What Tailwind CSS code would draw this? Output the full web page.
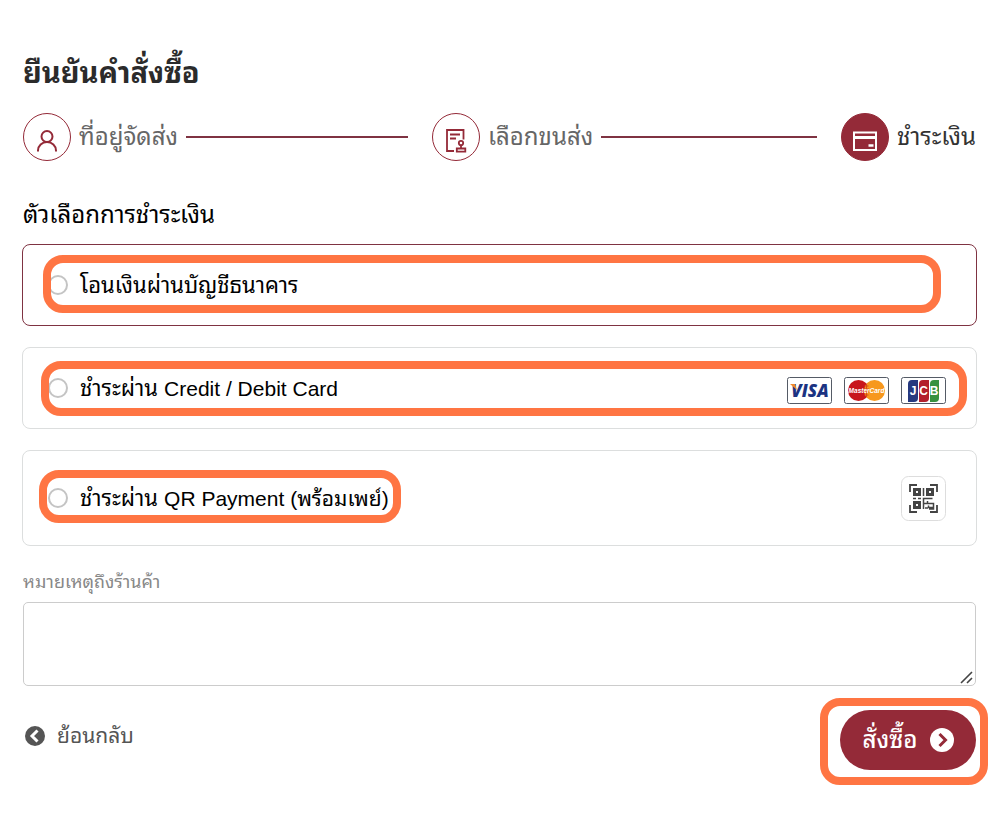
<!DOCTYPE html>
<html lang="th">
<head>
  <meta charset="UTF-8">
  <meta name="viewport" content="width=device-width, initial-scale=1.0">
  <title>ยืนยันคำสั่งซื้อ</title>
  <script src="https://cdn.jsdelivr.net/npm/@tailwindcss/browser@4"></script>
</head>
<body class="bg-white text-black font-['Liberation_Sans','Waree','Noto_Sans_Thai_Looped','Loma','Noto_Sans_Thai','Noto_Sans',sans-serif]">
  <main class="pl-[22px] pr-[31px] pt-[53px] pb-11">
    <h1 class="mx-px text-[29px] leading-10 font-bold text-[#2b2b2b]">ยืนยันคำสั่งซื้อ</h1>

    <!-- Steps -->
    <ol class="mx-px mt-5 flex items-center gap-6 text-2xl leading-8 text-[#666]">
      <li class="flex flex-1 items-center gap-2">
        <span class="size-12 shrink-0 rounded-full border border-[#942a38] text-[#942a38]">
          <svg class="size-full" viewBox="0 0 46 46" fill="none" stroke="currentColor" stroke-width="2">
            <circle cx="23" cy="22.500" r="5.500"/>
            <path d="M14 37.500v-1a9 8.500 0 0 1 18 0v1"/>
          </svg>
        </span>
        <span>ที่อยู่จัดส่ง</span>
        <span class="h-[2px] flex-1 bg-[#7f3342]"></span>
      </li>
      <li class="flex flex-1 items-center gap-2">
        <span class="size-12 shrink-0 rounded-full border border-[#942a38] text-[#942a38]">
          <svg class="size-full" viewBox="0 0 46 46" fill="none" stroke="currentColor" stroke-width="1.800">
            <path d="M21 37h-7V16h16.500v9.500M17 20.500h10M17 24.500h6"/>
            <circle cx="28" cy="29" r="2.200"/>
            <path d="M28 31.500V34M23.800 34.500h8.500v3.200h-8.500z"/>
          </svg>
        </span>
        <span>เลือกขนส่ง</span>
        <span class="h-[2px] flex-1 bg-[#7f3342]"></span>
      </li>
      <li class="flex items-center gap-2 text-[#333]">
        <span class="size-12 shrink-0 rounded-full border border-[#942a38] bg-[#942a38] text-white">
          <svg class="size-full" viewBox="0 0 46 46" fill="none" stroke="currentColor" stroke-width="2">
            <path d="M12 18.500h22v17.500H12z"/>
            <path d="M12 23.500h22" stroke-width="3"/>
            <path d="M26.500 31.500h5" stroke-width="2.500"/>
          </svg>
        </span>
        <span>ชำระเงิน</span>
      </li>
    </ol>

    <!-- Payment options -->
    <fieldset class="mt-9">
      <legend class="mx-px text-2xl leading-9">ตัวเลือกการชำระเงิน</legend>
      <div class="mt-[11px] space-y-[21px] text-[22px]">
        <div class="relative flex h-[82px] items-center rounded-lg border border-[#7f3342] pl-[25px]">
          <label class="flex items-center gap-3">
            <input type="radio" name="payment" class="size-5 appearance-none rounded-full border-2 border-[#c4c4c4] checked:border-[#942a38]">
            <span>โอนเงินผ่านบัญชีธนาคาร</span>
          </label>
          <span class="pointer-events-none absolute top-[10px] bottom-3 left-5 right-[35px] rounded-[20px] border-8 border-[#ff7543]"></span>
        </div>
        <div class="relative flex h-[82px] items-center justify-between rounded-lg border border-[#dcdede] pl-[25px] pr-[30px]">
          <label class="flex items-center gap-3">
            <input type="radio" name="payment" class="size-5 appearance-none rounded-full border-2 border-[#c4c4c4] checked:border-[#942a38]">
            <span>ชำระผ่าน <span class="text-[21px]">Credit / Debit Card</span></span>
          </label>
          <span class="flex gap-3 pt-1">
            <svg class="h-[27px] w-[45px] font-['Open_Sans',sans-serif]" viewBox="0 0 45 27">
              <rect x=".5" y=".5" width="44" height="26" rx="2" fill="#fff" stroke="#555b66"/>
              <text x="23" y="20" text-anchor="middle" font-size="17" font-weight="800" font-style="italic" fill="#1b3382">VISA</text>
              <path d="M3 7h5l2 6z" fill="#f08a2c"/>
            </svg>
            <svg class="h-[27px] w-[45px]" viewBox="0 0 45 27">
              <rect x=".5" y=".5" width="44" height="26" rx="2" fill="#fff" stroke="#555b66"/>
              <circle cx="14.500" cy="13.500" r="10.500" fill="#c8161d"/>
              <circle cx="30.500" cy="13.500" r="10.500" fill="#f7981d"/>
              <path d="M22.500 6.700v13.600M20.500 9h4M20 12h5M20 15h5M20.500 18h4" stroke="#d64a1c"/>
              <text x="22.500" y="16" text-anchor="middle" font-size="6.500" font-weight="700" font-style="italic" fill="#fff">MasterCard</text>
            </svg>
            <svg class="h-[27px] w-[45px]" viewBox="0 0 45 27">
              <rect x=".5" y=".5" width="44" height="26" rx="2" fill="#fff" stroke="#555b66"/>
              <path d="M11 3h6v18a4 4 0 0 1-4 4H7V7a4 4 0 0 1 4-4z" fill="#26397f"/>
              <path d="M22 3h6v18a4 4 0 0 1-4 4h-6V7a4 4 0 0 1 4-4z" fill="#b3202c"/>
              <path d="M33 3h5v18a4 4 0 0 1-4 4h-5V7a4 4 0 0 1 4-4z" fill="#37923f"/>
              <g font-size="12" font-weight="700" fill="#fff" text-anchor="middle">
                <text x="12" y="18">J</text>
                <text x="22.500" y="18">C</text>
                <text x="33" y="18">B</text>
              </g>
            </svg>
          </span>
          <span class="pointer-events-none absolute top-[13px] bottom-3 left-[18px] right-[9px] rounded-[20px] border-8 border-[#ff7543]"></span>
        </div>
        <div class="relative flex h-24 items-center justify-between rounded-lg border border-[#dcdede] pl-[25px] pr-[30px]">
          <label class="flex items-center gap-3">
            <input type="radio" name="payment" class="size-5 appearance-none rounded-full border-2 border-[#c4c4c4] checked:border-[#942a38]">
            <span>ชำระผ่าน <span class="text-[21px]">QR Payment (พร้อมเพย์)</span></span>
          </label>
          <svg class="size-[45px]" viewBox="0 0 45 45" fill="none" stroke="#444" stroke-width="1.500">
            <rect x=".5" y=".5" width="44" height="44" rx="7" stroke="#ddd" stroke-width="1"/>
            <path d="M9 16V9h7M29 9h7v7M36 29v7h-7M16 36H9v-7" stroke-width="1.800"/>
            <path d="M13.500 13.500h5v5h-5zM26.500 13.500h5v5h-5zM13.500 26.500h5v5h-5z" stroke-width="3"/>
            <path d="M22.500 12v8M12 22.500h3M17 22.500h3M22.500 33V22.500h9M22.500 27.500h4v-2.500M26.500 27.500h6v4h-5v-2M24 32h3M32.500 31v2H28" stroke-width="1.500"/>
          </svg>
          <span class="pointer-events-none absolute top-[19px] bottom-[22px] left-4 w-[362px] rounded-[20px] border-8 border-[#ff7543]"></span>
        </div>
      </div>
    </fieldset>

    <div class="relative mt-5 mx-px">
      <label for="note" class="block text-lg leading-8 text-[#888]">หมายเหตุถึงร้านค้า</label>
      <textarea id="note" name="note" class="mt-1 block h-[84px] w-full resize-none rounded-[5px] border border-[#ccc] p-3 text-xl"></textarea>
      <svg class="pointer-events-none absolute right-[3px] bottom-[2px] size-[13px]" viewBox="0 0 13 13" stroke="#444" stroke-width="1.600">
        <path d="M1 12L12 1M7 12l5-5"/>
      </svg>
    </div>

    <div class="mt-6 flex items-start justify-between pl-[3px] pr-px">
      <a href="#" class="flex items-center gap-3 text-[21px] leading-[52px] text-[#555]">
        <svg class="size-5" viewBox="0 0 20 20">
          <circle cx="10" cy="10" r="10" fill="#555"/>
          <path d="M12.500 4.500L7 10l5.500 5.500" fill="none" stroke="#fff" stroke-width="3"/>
        </svg>
        <span>ย้อนกลับ</span>
      </a>
      <div class="relative">
        <button type="submit" class="flex h-[60px] w-[136px] items-center justify-center gap-3 rounded-full bg-[#942a38] text-2xl font-medium text-white">
          <span>สั่งซื้อ</span>
          <svg class="size-6" viewBox="0 0 24 24">
            <circle cx="12" cy="12" r="12" fill="#fff"/>
            <path d="M9.500 6l6 6-6 6" fill="none" stroke="#942a38" stroke-width="3"/>
          </svg>
        </button>
        <span class="pointer-events-none absolute -top-3 -bottom-[15px] -left-5 -right-3 rounded-[20px] border-8 border-[#ff7543]"></span>
      </div>
    </div>
  </main>
</body>
</html>
